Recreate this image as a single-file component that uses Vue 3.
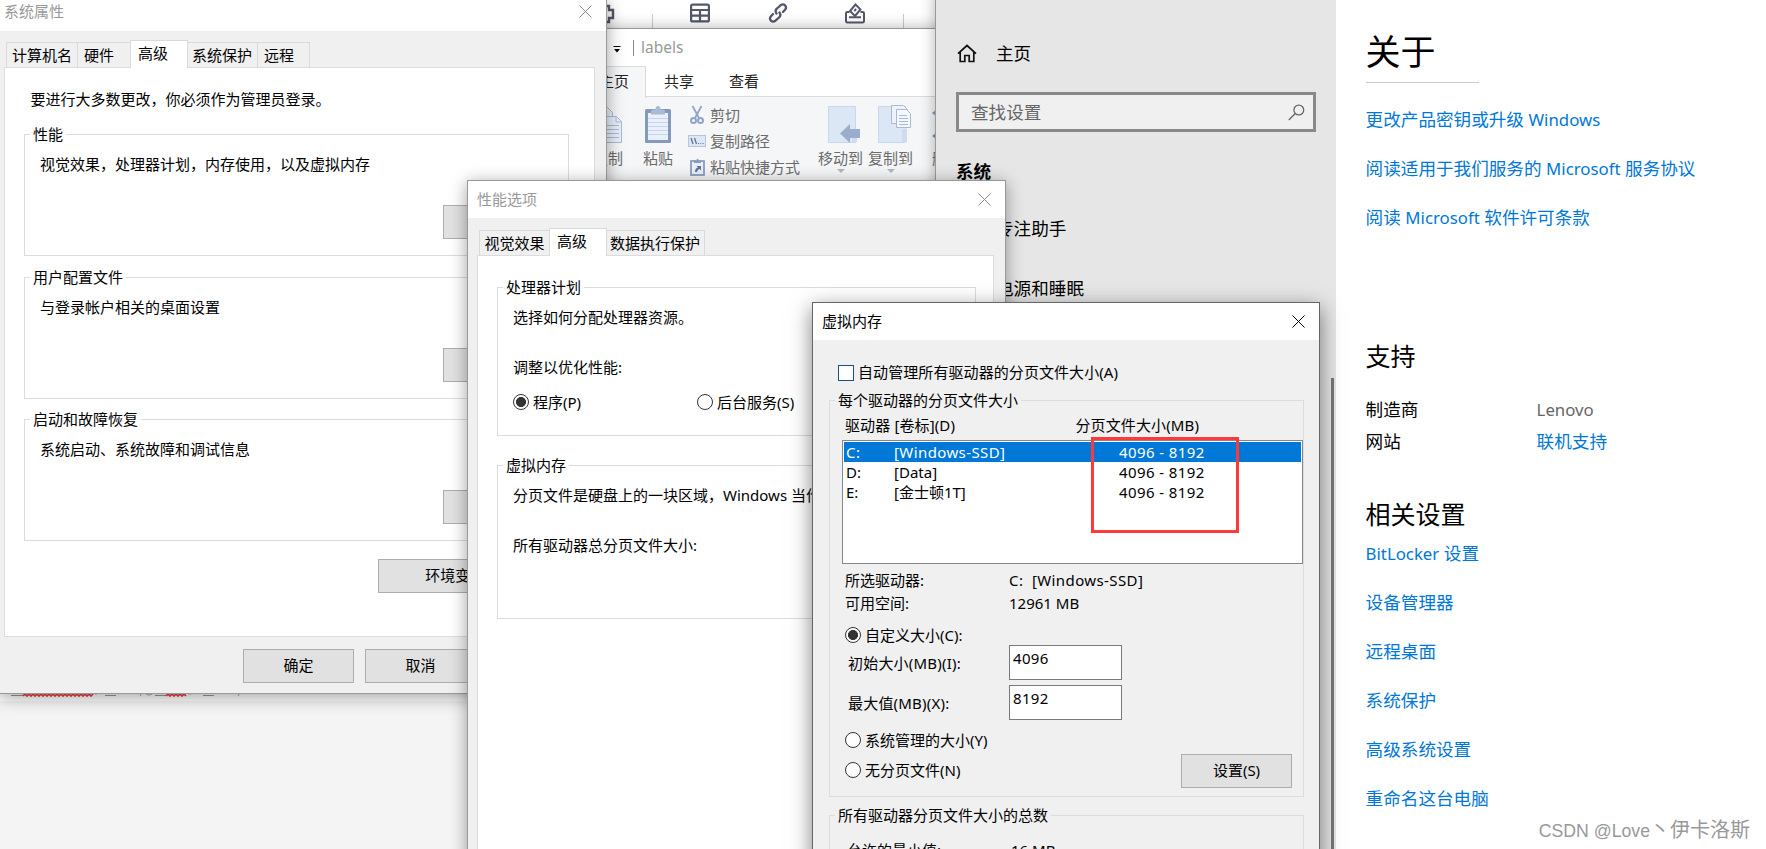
<script setup>
import { ref } from 'vue'

const sysTabs = ['计算机名', '硬件', '高级', '系统保护', '远程']
const perfTabs = ['视觉效果', '高级', '数据执行保护']

const sysGroups = [
  { title: '性能', desc: '视觉效果，处理器计划，内存使用，以及虚拟内存', btn: '设置(S)...' },
  { title: '用户配置文件', desc: '与登录帐户相关的桌面设置', btn: '设置(E)...' },
  { title: '启动和故障恢复', desc: '系统启动、系统故障和调试信息', btn: '设置(T)...' }
]

const drives = [
  { letra: 'C:', label: '[Windows-SSD]', size: '4096 - 8192' },
  { letra: 'D:', label: '[Data]', size: '4096 - 8192' },
  { letra: 'E:', label: '[金士顿1T]', size: '4096 - 8192' }
]

const related = ['设备管理器', '远程桌面', '系统保护', '高级系统设置', '重命名这台电脑']

const selected = ref(0)
const autoManage = ref(false)
const schedule = ref('P')
const mode = ref('custom')
const initial = ref('4096')
const maximum = ref('8192')
</script>

<template>
  <div class="desktop">
    <!-- editor -->
    <div class="editor">
      <svg class="squiggle" width="250" height="8" viewBox="0 0 250 8">
        <path d="M11 5.5h12M105 5.5h11M155 5.5h11M203 5.5h11" stroke="#999" />
        <path d="M142 2l-2 4M145 3q4 4 8 0M240 3l-2 3M96 2v3M190 2v3" stroke="#aaa" fill="none" />
        <path d="M23 6l2-2 2 2 2-2 2 2 2-2 2 2 2-2 2 2 2-2 2 2 2-2 2 2 2-2 2 2 2-2 2 2 2-2 2 2 2-2 2 2 2-2 2 2 2-2 2 2 2-2 2 2 2-2 2 2 2-2 2 2 2-2 2 2 2-2 2 2 2-2M166 6l2-2 2 2 2-2 2 2 2-2 2 2 2-2 2 2 2-2 2 2" stroke="#f03a40" stroke-width="1.6" fill="none" />
      </svg>
    </div>
    <div class="toolbar">
      <svg width="10" height="22" viewBox="0 0 10 22" fill="none" stroke="#55576a" stroke-width="2.4"><path d="M0 3h3v4h4v8H3v4H0" /></svg>
      <i class="tb-sep first"></i>
      <svg class="tb-table" width="20" height="20" viewBox="0 0 20 20" fill="none" stroke="#55576a" stroke-width="2.2"><rect x="1.1" y="1.6" width="17.8" height="16.8" rx="1.5" /><path d="M1 7h18M1 12.6h18M10 7v11" /></svg>
      <svg class="tb-link" width="20" height="20" viewBox="0 0 20 20" fill="none" stroke="#55576a" stroke-width="2.3" stroke-linecap="round"><path d="M8.500 10.500Q6.500 7.500 9 5.500l3.500-3.200c3.500-2.500 7 1.200 4.700 4.300L15 9" /><path d="M11.500 9.500q2 3-.5 5l-3.500 3.200c-3.500 2.500-7-1.200-4.700-4.300L5 11" /></svg>
      <svg class="tb-stamp" width="20" height="21" viewBox="0 0 20 21" fill="none" stroke="#55576a" stroke-width="2"><path d="M4.500 9H2.200Q1 9 1 10.300v7.400Q1 19.400 2.500 19.400h15Q19 19.400 19 17.700v-7.400Q19 9 17.800 9h-2.300M4 14.300h12" /><path d="M10.500 1.500l5 5-5.500 6.500-5-5z" /><path d="M9.200 8l2-2" /></svg>
      <i class="tb-sep last"></i>
    </div>

    <!-- explorer -->
    <div class="explorer">
      <div class="ex-title">
        <svg width="8" height="7" viewBox="0 0 8 7"><path d="M0.500 .5h7" stroke="#000" /><path d="M1 3h6L4 6.500z" /></svg>
        <i></i>
        <span>labels</span>
      </div>
      <div class="ex-tabs">
        <span class="on">主页</span><span>共享</span><span>查看</span>
      </div>
      <div class="ribbon">
        <div class="rb-big rb-copy">
          <svg width="30" height="40" viewBox="0 0 30 40" fill="#e9eff8" stroke="#a9bad6"><path d="M.5 1.500h13l6 6v20H.5z" /><path d="M7.500 11.500h16l5 5v21h-21z" /><path d="M23 11.500v5.500h5M10 20.500h16M10 24.500h16M10 28.500h16M10 32.500h16" /></svg>
          <span>复制</span>
        </div>
        <div class="rb-big rb-paste">
          <svg width="28" height="40" viewBox="0 0 28 40"><rect x="1" y="4" width="26" height="34" rx="1.500" fill="#8599bd" /><rect x="4" y="8" width="20" height="27" fill="#e9f0fb" /><path d="M4 13.500h20M4 17.500h20M4 21.500h20M4 25.500h20M4 29.500h20" stroke="#c9d5e8" /><path d="M7 9.500V6.500q0-2 2-2h2.500q0-3.500 2.500-3.500t2.500 3.500H19q2 0 2 2v3z" fill="#a9bad4" /></svg>
          <span>粘贴</span>
        </div>
        <div class="rb-list">
          <div>
            <svg width="18" height="20" viewBox="0 0 18 20" fill="none" stroke="#93a5c4"><path d="M4.500 1l6.500 12M13.500 1L7 13" stroke-width="1.800" /><circle cx="5.500" cy="15.500" r="2.500" stroke-width="2" /><circle cx="12.500" cy="15.500" r="2.500" stroke-width="2" /></svg>
            剪切
          </div>
          <div>
            <svg width="18" height="12" viewBox="0 0 18 12"><rect x=".5" y=".5" width="17" height="11" fill="#dde7f5" stroke="#b5c5de" /><path d="M3 3l2 6M6.500 3l2 6" stroke="#5f7499" stroke-width="1.300" /><path d="M10 8.500h1M12.300 8.500h1M14.600 8.500h1" stroke="#5f7499" /></svg>
            复制路径
          </div>
          <div>
            <svg width="18" height="20" viewBox="0 0 18 20"><rect x="3" y="4" width="13" height="14" fill="#e9f0fb" stroke="#8a9dc0" stroke-width="1.800" /><path d="M6 6V3.500h2Q9.500 0 11 3.500h2V6z" fill="#8a9dc0" /><path d="M7 15q0-4 3-4.500L8.500 9H13v4.500L11.600 12Q9.500 12.500 9 15z" fill="#5f7499" /></svg>
            粘贴快捷方式
          </div>
        </div>
        <i class="rb-sep"></i>
        <div class="rb-big rb-move">
          <svg width="34" height="40" viewBox="0 0 34 40"><path d="M1.500 1.500h27v36h-27z" fill="#dce7f6" stroke="#c8d7ed" /><path d="M25 24h5v13h-5z" fill="#cfdcf0" /><path d="M13 28.500L23 19v5h10v9H23v5z" fill="#9aadcb" /></svg>
          <span>移动到</span>
          <b></b>
        </div>
        <div class="rb-big rb-to">
          <svg width="34" height="40" viewBox="0 0 34 40"><path d="M1.500 1.500h27v36h-27z" fill="#dce7f6" stroke="#c8d7ed" /><path d="M25 24h5v13h-5z" fill="#cfdcf0" /><path d="M14.500.5h12l4 4v14h-16z" fill="#eef3fa" stroke="#a9bad6" /><path d="M19.500 4.500h10l4 4v14h-14z" fill="#f4f7fc" stroke="#a9bad6" /><path d="M22 10.500h8M22 13.500h9M22 16.500h9M22 19.500h9" stroke="#a9bad6" /></svg>
          <span>复制到</span>
          <b></b>
        </div>
        <i class="rb-sep short"></i>
        <div class="rb-big rb-del">
          <svg width="34" height="40" viewBox="0 0 34 40"><path d="M0 8l4-3v6zM0 31l4-3v6z" fill="#7f95ba" /></svg>
          <span>删除</span>
        </div>
      </div>
    </div>

    <!-- settings -->
    <div class="settings">
      <div class="nav">
        <div class="home">
          <svg width="20" height="19" viewBox="0 0 20 19" fill="none" stroke="#111" stroke-width="1.700"><path d="M1 9.700L10 1.500l9 8.200M3.200 8v9.500h4.600v-6h4.400v6h4.600V8" /></svg>
          <span>主页</span>
        </div>
        <div class="search">
          <span>查找设置</span>
          <svg width="17" height="17" viewBox="0 0 17 17" fill="none" stroke="#666" stroke-width="1.300"><circle cx="10.800" cy="6" r="4.900" /><path d="M7.300 9.500L.8 16" /></svg>
        </div>
        <div class="nav-head">系统</div>
        <div class="nav-item focus">专注助手</div>
        <div class="nav-item power">电源和睡眠</div>
        <div class="scrollbar"></div>
      </div>
      <div class="content">
        <h1>关于</h1>
        <hr />
        <div class="links">
          <a>更改产品密钥或升级 <em>Windows</em></a>
          <a>阅读适用于我们服务的 <em>Microsoft</em> 服务协议</a>
          <a>阅读 <em>Microsoft</em> 软件许可条款</a>
        </div>
        <h2 class="support">支持</h2>
        <div class="kv"><span>制造商</span><span class="grey"><em>Lenovo</em></span></div>
        <div class="kv"><span>网站</span><a>联机支持</a></div>
        <h2 class="rel">相关设置</h2>
        <div class="links">
          <a><em>BitLocker</em> 设置</a>
          <a v-for="r in related" :key="r">{{ r }}</a>
        </div>
      </div>
    </div>

    <!-- system properties -->
    <div class="win sys">
      <div class="titlebar">
        <span>系统属性</span>
        <svg width="13" height="13" viewBox="0 0 13 13"><path d="M.5.5l12 12M12.500.5l-12 12" /></svg>
      </div>
      <div class="tabs">
        <span v-for="(t, i) in sysTabs" :key="t" :class="{ on: i === 2, before: i < 2 }">{{ t }}</span>
      </div>
      <div class="panel">
        <p>要进行大多数更改，你必须作为管理员登录。</p>
        <fieldset v-for="g in sysGroups" :key="g.title">
          <legend>{{ g.title }}</legend>
          <p>{{ g.desc }}</p>
          <button>{{ g.btn }}</button>
        </fieldset>
        <button class="env">环境变量(N)...</button>
      </div>
      <div class="footer">
        <button>确定</button>
        <button>取消</button>
        <button>应用(A)</button>
      </div>
    </div>

    <!-- performance options -->
    <div class="win perf">
      <div class="titlebar">
        <span>性能选项</span>
        <svg width="13" height="13" viewBox="0 0 13 13"><path d="M.5.5l12 12M12.500.5l-12 12" /></svg>
      </div>
      <div class="tabs">
        <span v-for="(t, i) in perfTabs" :key="t" :class="{ on: i === 1, before: i < 1 }">{{ t }}</span>
      </div>
      <div class="panel">
        <fieldset class="cpu">
          <legend>处理器计划</legend>
          <p>选择如何分配处理器资源。</p>
          <p class="second">调整以优化性能:</p>
          <div class="radios">
            <div class="radio" :class="{ on: schedule === 'P' }" @click="schedule = 'P'"><i></i>程序(P)</div>
            <div class="radio" :class="{ on: schedule === 'S' }" @click="schedule = 'S'"><i></i>后台服务(S)</div>
          </div>
        </fieldset>
        <fieldset class="vmem">
          <legend>虚拟内存</legend>
          <p>分页文件是硬盘上的一块区域，Windows 当作 RAM 使用。</p>
          <p class="second">所有驱动器总分页文件大小:</p>
        </fieldset>
      </div>
    </div>

    <!-- virtual memory -->
    <div class="win vm">
      <div class="titlebar">
        <span>虚拟内存</span>
        <svg width="13" height="13" viewBox="0 0 13 13"><path d="M.5.5l12 12M12.500.5l-12 12" /></svg>
      </div>
      <div class="check" @click="autoManage = !autoManage"><i></i><span>自动管理所有驱动器的分页文件大小(A)</span></div>
      <fieldset class="each">
        <legend>每个驱动器的分页文件大小</legend>
        <div class="row head"><span>驱动器 [卷标](D)</span><span>分页文件大小(MB)</span></div>
        <div class="list">
          <div v-for="(d, i) in drives" :key="d.letra" class="drive" :class="{ sel: selected === i }" @click="selected = i">
            <span>{{ d.letra }}</span><span>{{ d.label }}</span><span>{{ d.size }}</span>
          </div>
          <div class="mark"></div>
        </div>
        <div class="row chosen"><span>所选驱动器:</span><span class="val">C:&nbsp; [Windows-SSD]</span></div>
        <div class="row space"><span>可用空间:</span><span>12961 MB</span></div>
        <div class="radio custom" :class="{ on: mode === 'custom' }" @click="mode = 'custom'"><i></i>自定义大小(C):</div>
        <div class="row field"><span>初始大小(MB)(I):</span><input v-model="initial" /></div>
        <div class="row field"><span>最大值(MB)(X):</span><input v-model="maximum" /></div>
        <div class="last-row">
          <div class="modes">
            <div class="radio" :class="{ on: mode === 'system' }" @click="mode = 'system'"><i></i>系统管理的大小(Y)</div>
            <div class="radio" :class="{ on: mode === 'none' }" @click="mode = 'none'"><i></i>无分页文件(N)</div>
          </div>
          <button>设置(S)</button>
        </div>
      </fieldset>
      <fieldset class="total">
        <legend>所有驱动器分页文件大小的总数</legend>
        <div class="row"><span>允许的最小值:</span><span>16 MB</span></div>
      </fieldset>
    </div>

    <div class="watermark"><span>CSDN @Love</span>丶伊卡洛斯</div>
  </div>
</template>

<style>
html, body { margin: 0; overflow: hidden; }
</style>

<style scoped>
.desktop { position: relative; width: 1766px; height: 849px; overflow: hidden; background: #f4f4f4; color: #000; font-family: 'Noto Sans', 'Noto Sans CJK SC', sans-serif; font-size: 15px; line-height: 20px; }
.desktop * { box-sizing: border-box; }
.desktop svg { display: block; flex: none; }
p { height: 20px; margin: 0; line-height: 18px; white-space: nowrap; }

/* editor + toolbar behind everything */
.editor { position: absolute; left: 0; top: 0; width: 940px; height: 701px; background: #fff; }
.squiggle { position: absolute; left: 0; top: 690px; }
.toolbar { position: absolute; left: 606px; top: 0; width: 329px; height: 28px; display: flex; align-items: flex-start; padding-top: 3px; background: #fff; }
.tb-sep { width: 1px; height: 14px; margin-top: 11px; background: #ccc; }
.tb-sep.first { margin-left: 36px; }
.tb-sep.last { margin-left: 38px; }
.tb-table { margin-left: 37px; }
.tb-link { margin-left: 58px; }
.tb-stamp { margin-left: 57px; }

.explorer { position: absolute; left: 400px; top: 28px; width: 560px; height: 400px; background: #fff; border-top: 1px solid #999; box-shadow: 0 0 14px rgba(0, 0, 0, .3); padding-left: 206px; }
.ex-title { display: flex; align-items: center; height: 37px; padding-left: 7px; color: #999; }
.ex-title svg { margin-top: 4px; }
.ex-title i { width: 1px; height: 16px; margin: 0 7px 0 12px; background: #888; }
.ex-title span { font-size: 15.500px; margin-top: -2px; }
.ex-tabs { display: flex; height: 31px; border-bottom: 1px solid #dadbdc; margin-left: -30px; color: #222; line-height: 30px; }
.ex-tabs span { padding: 0 17px 0 18px; white-space: nowrap; }
.ex-tabs .on { width: 70px; height: 32px; padding: 0 0 0 22px; border: 1px solid #dadbdc; border-bottom: 0; background: #f5f6f7; line-height: 29px; }
.ribbon { display: flex; height: 120px; background: #f5f6f7; color: #6b6b6b; white-space: nowrap; }
.rb-big { display: flex; flex-direction: column; align-items: center; padding-top: 8px; }
.rb-big span { margin-top: 3px; }
.rb-big b { border: 4px solid transparent; border-top-color: #b3b6ba; border-bottom: 0; margin-top: 1px; }
.rb-copy { width: 30px; margin-left: -13px; }
.rb-paste { width: 30px; margin-left: 20px; }
.rb-list { display: flex; flex-direction: column; gap: 6px; margin-left: 15px; padding-top: 8px; }
.rb-list div { display: flex; align-items: center; gap: 4px; }
.rb-sep { width: 1px; background: #e0e1e3; margin: 3px 7px 0 11px; }
.rb-sep.short { height: 55px; margin: 22px 12px 0 7px; }
.rb-move, .rb-to { width: 45px; }
.rb-to { margin-left: 5px; }
.rb-move svg, .rb-to svg { margin-left: 6px; }
.rb-del { align-items: flex-start; }

/* settings */
.settings { position: absolute; left: 935px; top: -10px; width: 860px; height: 900px; padding-top: 10px; display: flex; background: linear-gradient(90deg, #e6e6e6 400px, #fff 400px); border-left: 1px solid #999; box-shadow: 0 0 14px rgba(0, 0, 0, .3); font-size: 17.600px; }
.nav { position: relative; flex: none; width: 400px; padding: 43px 20px 0; }
.home { display: flex; align-items: center; height: 20px; gap: 19px; padding-left: 1px; }
.search { display: flex; align-items: center; justify-content: space-between; width: 360px; height: 40px; margin-top: 29px; padding: 0 8px 0 12px; border: 3px solid #888; background: #f0f0f0; color: #666; }
.nav-head { margin-top: 29px; font-weight: 700; }
.nav-item { padding-left: 40px; }
.nav-item.focus { margin-top: 37px; }
.nav-item.power { margin-top: 40px; }
.scrollbar { position: absolute; right: 2px; top: 378px; width: 3px; height: 500px; background: #777; }
.content { flex: 1; padding: 32px 0 0 29.600px; }
em { font-style: normal; font-size: 16.800px; line-height: 1; }
h1 { margin: 0; font-size: 35px; line-height: 40px; font-weight: 400; }
hr { width: 113px; height: 1px; margin: 10px 0 26px; border: 0; background: #ccc; }
.links { display: flex; flex-direction: column; gap: 29px; white-space: nowrap; }
.links a { height: 20px; }
a { color: #0078d7; }
h2 { margin: 0; font-size: 25px; line-height: 30px; font-weight: 400; }
.support { margin: 114px 0 28px; }
.kv { display: grid; grid-template-columns: 171px 1fr; height: 31.500px; }
.grey { color: #666; }
.rel { margin: 37px 0 14px; }

/* dialogs */
.win { position: absolute; display: flex; flex-direction: column; background: #f0f0f0; border: 1px solid #999; box-shadow: 0 3px 16px rgba(0, 0, 0, .38); }
.titlebar { display: flex; align-items: center; justify-content: space-between; height: 37px; flex: none; padding: 0 14px 0 9px; background: #fff; color: #999; }
.titlebar span { padding-bottom: 2px; }
.titlebar svg { stroke: #888; stroke-width: 1; fill: none; }
.tabs { display: flex; align-items: flex-end; height: 37px; flex: none; line-height: 24px; white-space: nowrap; }
.tabs span { height: 25px; min-width: 52px; padding: 0 5px 0 4px; border: 1px solid #dadada; border-width: 1px 1px 0 0; }
.tabs .before { min-width: 53px; padding: 0 5px; border-width: 1px 0 0 1px; }
.tabs .on { height: 28px; min-width: 58px; margin-bottom: -1px; padding-left: 7px; border-width: 1px 1px 0; background: #fff; position: relative; }
.tabs .before + .before, .tabs span:nth-child(5) { padding-left: 6px; }
.panel { flex: none; background: #fff; border: 1px solid #dcdcdc; }
fieldset { display: block; margin: 0; padding: 10px 14px 0 15px; border: 1px solid #dcdcdc; min-width: 0; }
legend { margin-left: -10px; padding: 0 3px; line-height: 21px; }
button { display: block; width: 111px; height: 34px; padding: 0 0 2px; border: 1px solid #adadad; background: #e1e1e1; font: inherit; line-height: 30px; color: #000; white-space: nowrap; border-radius: 0; }

.sys { left: -1px; top: -1px; width: 608px; height: 695px; }
.sys .titlebar { height: 31px; padding: 0 14px 8px 4px; }
.sys .tabs { padding-left: 6px; }
.sys .panel { width: 591px; height: 570px; margin-left: 4px; padding: 22px 0 0 19px; }
.sys .tabs { height: 36px; }
.sys .panel > p { margin: 0 0 14px 6.500px; }
.sys fieldset { width: 545px; height: 132px; margin-bottom: 10px; }
.sys fieldset:nth-of-type(1) { margin-bottom: 11px; }
.sys fieldset button { margin: 30px 0 0 auto; }
.sys .env { width: 187px; margin: 18px 0 0 354px; }
.footer { display: flex; justify-content: flex-end; gap: 11px; padding: 12px 8px 0 0; }

.perf { left: 467px; top: 180px; width: 539px; height: 740px; }
.perf .tabs { padding-left: 11px; }
.perf .tabs .before { padding: 0 4.500px; }
.perf .tabs .on { padding-left: 7px; }
.perf .tabs .on + span { padding: 0 4px 0 3px; }
.perf .panel { width: 517px; height: 640px; margin-left: 9px; padding: 21px 0 0 19px; }
.perf fieldset { width: 479px; height: 164px; }
.perf .cpu { height: 159px; margin-bottom: 19px; }
p.second { margin-top: 30px; }
.radios { display: grid; grid-template-columns: 184px 1fr; margin-top: 14px; }
.radio { display: flex; align-items: center; gap: 4px; height: 20px; white-space: nowrap; }
.radio i { width: 16px; height: 16px; border: 1px solid #333; border-radius: 50%; background: #fff; }
.radio.on i { background: radial-gradient(circle, #333 4.700px, #fff 5.300px); }

.vm { left: 812px; top: 302px; width: 508px; height: 640px; border-color: #666; box-shadow: 0 6px 20px rgba(0, 0, 0, .5); }
.vm .titlebar { color: #000; }
.vm .titlebar svg { stroke: #000; }
.check { display: flex; align-items: center; gap: 4px; margin: 22px 0 7px 25px; height: 21px; white-space: nowrap; }
.check i { width: 16px; height: 16px; border: 1px solid #1a4f7f; background: #fff; }
.check span { padding-bottom: 2px; letter-spacing: .08px; }
.vm fieldset { width: 475px; margin-left: 16px; flex: none; }
.vm .each { height: 407px; padding-top: 5px; padding-right: 0; }
.row { display: grid; grid-template-columns: 164px 1fr; height: 20px; line-height: 18px; white-space: nowrap; }
.val { letter-spacing: .4px; }
.head { grid-template-columns: 230.500px 1fr; letter-spacing: .12px; }
.list { position: relative; width: 461px; height: 124px; margin: 4px 0 0 -3px; padding: 1px; border: 1px solid #828790; background: #fff; }
.drive { display: grid; grid-template-columns: 48px 225px 1fr; height: 20px; padding-left: 2px; }
.drive span:nth-child(3), .drive.sel span { letter-spacing: .4px; }
.drive.sel { background: #0078d7; color: #fff; }
.mark { position: absolute; left: 248px; top: -4px; width: 148px; height: 96px; border: 3px solid #fd3a3a; }
.chosen { margin-top: 7px; }
.space { margin: 3px 0 11px; }
.row.field { height: 35px; margin-bottom: 5px; line-height: 36px; letter-spacing: .2px; }
.field span { padding-left: 3px; }
input { width: 113px; height: 35px; padding: 0 3px 9px; border: 1px solid #7a7a7a; border-radius: 0; background: #fff; font: inherit; line-height: 20px; letter-spacing: .3px; color: #000; outline: none; }
.last-row { display: flex; align-items: flex-end; justify-content: space-between; height: 63px; margin-right: 11px; }
.modes { align-self: flex-start; display: flex; flex-direction: column; gap: 10px; margin-top: 5px; }
.vm .total { height: 160px; margin-top: 8px; padding: 15px 0 0 17px; }
.vm .total legend { margin-left: -12px; }

.watermark { position: absolute; right: 16px; bottom: 6px; font-size: 20px; line-height: 24px; color: #999; font-family: 'Liberation Sans', 'Noto Sans CJK SC', sans-serif; white-space: nowrap; }
.watermark span { font-size: 17.700px; }
</style>
